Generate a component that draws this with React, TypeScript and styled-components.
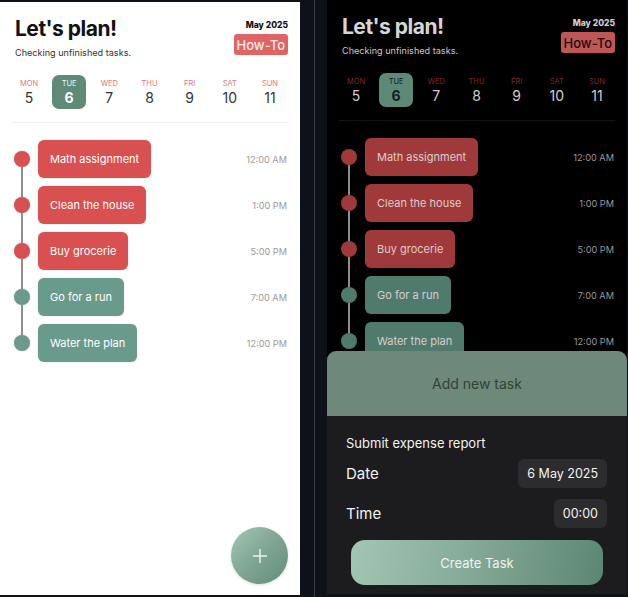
import React from "react";
import styled, { createGlobalStyle, css } from "styled-components";

const Global = createGlobalStyle`
  html, body { margin: 0; padding: 0; background: #0e1118; }
  body { font-family: "Inter", "Liberation Sans", sans-serif; -webkit-font-smoothing: antialiased; }
  * { box-sizing: border-box; }
`;

type Dark = { $dark?: boolean };

const Page = styled.div`
  width: 628px;
  height: 597px;
  display: flex;
  align-items: flex-start;
  padding-top: 2px;
  background: #0e1118;
  overflow: hidden;
`;

const Panel = styled.div<Dark>`
  position: relative;
  width: 300px;
  height: 593px;
  flex-shrink: 0;
  overflow: hidden;
  background: ${(p) => (p.$dark ? "#000" : "#fff")};
  display: flex;
  flex-direction: column;
  ${(p) =>
    p.$dark &&
    css`
      margin-top: -2px;
      height: 594px;
    `}
`;

const Gutter = styled.div`
  width: 27px;
  height: 597px;
  flex-shrink: 0;
  display: flex;
  justify-content: center;
  margin-top: -2px;
`;

const GutterLine = styled.div`
  width: 1px;
  margin-left: 1px;
  height: 100%;
  background: #3a3e47;
`;

const Header = styled.div`
  display: flex;
  justify-content: space-between;
  padding: 14px 12px 0 15px;
`;

const TitleBlock = styled.div`
  display: flex;
  flex-direction: column;
`;

const Title = styled.h1<Dark>`
  margin: 0;
  font-size: 21px;
  line-height: 26px;
  font-weight: 700;
  letter-spacing: -0.5px;
  color: ${(p) => (p.$dark ? "#d6d6d6" : "#111")};
`;

const Subtitle = styled.p<Dark>`
  margin: 5px 0 0;
  font-size: 9.1px;
  line-height: 12px;
  color: ${(p) => (p.$dark ? "#c8c8c8" : "#333")};
`;

const MetaBlock = styled.div`
  display: flex;
  flex-direction: column;
  align-items: flex-end;
  padding-top: 4px;
`;

const Month = styled.span<Dark>`
  font-size: 8.5px;
  line-height: 11px;
  font-weight: 800;
  color: ${(p) => (p.$dark ? "#d0d0d0" : "#111")};
`;

const HowTo = styled.span<Dark>`
  margin-top: 3px;
  height: 21px;
  padding: 0 3px;
  display: flex;
  align-items: center;
  border-radius: 3px;
  font-size: 13px;
  font-weight: 500;
  background: ${(p) => (p.$dark ? "#c05656" : "#e06464")};
  color: ${(p) => (p.$dark ? "#1a0c0c" : "#fbeaea")};
`;

const DayStrip = styled.div`
  display: grid;
  grid-template-columns: repeat(7, 34px);
  justify-content: space-between;
  padding: 16px 13px 0 12px;
`;

const Day = styled.div<Dark & { $active?: boolean }>`
  height: 34px;
  border-radius: 7px;
  display: flex;
  flex-direction: column;
  align-items: center;
  justify-content: center;
  background: ${(p) => (p.$active ? (p.$dark ? "#5d8a77" : "#5e8a77") : "transparent")};
`;

const DayName = styled.span<Dark & { $active?: boolean }>`
  font-size: 7.5px;
  line-height: 10px;
  text-transform: uppercase;
  color: ${(p) =>
    p.$active ? (p.$dark ? "#14201b" : "#f1f6f3") : p.$dark ? "#7d2a2a" : "#e07878"};
`;

const DayNum = styled.span<Dark & { $active?: boolean }>`
  font-size: 14px;
  line-height: 17px;
  font-weight: ${(p) => (p.$active ? 700 : 400)};
  color: ${(p) =>
    p.$active ? (p.$dark ? "#14201b" : "#fff") : p.$dark ? "#cfcfcf" : "#333"};
`;

const Divider = styled.div<Dark>`
  height: 1px;
  margin: 13px 12px 0;
  background: ${(p) => (p.$dark ? "#141414" : "#efefef")};
`;

const Timeline = styled.div`
  display: flex;
  flex-direction: column;
  padding: 13px 13px 0 14px;
`;

const Row = styled.div`
  display: grid;
  grid-template-columns: 24px auto 1fr auto;
  align-items: stretch;
`;

const Rail = styled.div`
  display: flex;
  flex-direction: column;
  align-items: center;
  padding-right: 8px;
  width: 24px;
`;

const Segment = styled.div<{ $hidden?: boolean }>`
  flex: 1;
  width: 2px;
  background: ${(p) => (p.$hidden ? "transparent" : "#8e8e8e")};
`;

const Dot = styled.div<{ $color: string; $dark?: boolean }>`
  width: 16px;
  height: 16px;
  border-radius: 50%;
  background: ${(p) => p.$color};
  box-shadow: ${(p) => (p.$dark ? "none" : "0 0 1.5px rgba(0,0,0,0.25)")};
  flex-shrink: 0;
`;

const PillCell = styled.div`
  padding: 4px 0;
`;

const Pill = styled.div<{ $color: string; $dark?: boolean }>`
  height: 38px;
  padding: 0 12px;
  display: flex;
  align-items: center;
  border-radius: 6px;
  font-size: 11px;
  background: ${(p) => p.$color};
  color: ${(p) => (p.$dark ? "#dccccc" : "#fff")};
  box-shadow: ${(p) => (p.$dark ? "none" : "0 0 1.5px rgba(0,0,0,0.2)")};
  white-space: nowrap;
`;

const Time = styled.span<Dark>`
  grid-column: 4;
  align-self: center;
  font-size: 9.2px;
  color: #9a9a9a;
`;

const Fab = styled.button`
  position: absolute;
  left: 231px;
  top: 525px;
  width: 57px;
  height: 57px;
  border-radius: 50%;
  border: none;
  padding: 0;
  display: flex;
  align-items: center;
  justify-content: center;
  background: linear-gradient(135deg, #a4c6b4 0%, #7fa692 50%, #628c79 100%);
  box-shadow: 0 1px 3px rgba(0,0,0,0.15);
`;

const Sheet = styled.div`
  position: absolute;
  left: 0;
  right: 0;
  bottom: 0;
  height: 243px;
  border-radius: 9px 9px 0 0;
  overflow: hidden;
  display: flex;
  flex-direction: column;
  background: #1c1c1e;
`;

const SheetHeader = styled.div`
  height: 65px;
  display: flex;
  align-items: center;
  justify-content: center;
  background: #6e8979;
  color: #334238;
  font-size: 14px;
`;

const SheetBody = styled.div`
  flex: 1;
  display: flex;
  flex-direction: column;
  padding: 19px 20px 0 19px;
  color: #f2f2f2;
`;

const TaskName = styled.div`
  font-size: 13px;
  line-height: 16px;
`;

const Fields = styled.div`
  display: flex;
  flex-direction: column;
  gap: 11px;
  margin-top: 8px;
`;

const FieldRow = styled.div`
  display: flex;
  align-items: center;
  justify-content: space-between;
`;

const FieldLabel = styled.span`
  font-size: 15px;
`;

const FieldValue = styled.span`
  height: 29px;
  padding: 0 9px;
  border-radius: 6px;
  display: flex;
  align-items: center;
  background: #2c2c2f;
  font-size: 12.5px;
  color: #f2f2f2;
`;

const CreateButton = styled.button`
  margin: 12px 4px 0 5px;
  height: 45px;
  border: none;
  border-radius: 14px;
  background: linear-gradient(100deg, #a3c6b3 0%, #86ab98 45%, #5c8674 100%);
  color: #eef3f0;
  font-family: inherit;
  font-size: 13px;
`;

type Task = { title: string; time: string; done: boolean };

const tasks: Task[] = [
  { title: "Math assignment", time: "12:00 AM", done: false },
  { title: "Clean the house", time: "1:00 PM", done: false },
  { title: "Buy grocerie", time: "5:00 PM", done: false },
  { title: "Go for a run", time: "7:00 AM", done: true },
  { title: "Water the plan", time: "12:00 PM", done: true },
];

const days = [
  ["Mon", 5],
  ["Tue", 6],
  ["Wed", 7],
  ["Thu", 8],
  ["Fri", 9],
  ["Sat", 10],
  ["Sun", 11],
] as const;

const palette = {
  light: { red: "#d95050", green: "#6a9a8b" },
  dark: { red: "#a03a3a", green: "#4f7a6c" },
};

function Planner({ dark }: { dark?: boolean }) {
  const c = dark ? palette.dark : palette.light;
  return (
    <>
      <Header>
        <TitleBlock>
          <Title $dark={dark}>Let's plan!</Title>
          <Subtitle $dark={dark}>Checking unfinished tasks.</Subtitle>
        </TitleBlock>
        <MetaBlock>
          <Month $dark={dark}>May 2025</Month>
          <HowTo $dark={dark}>How-To</HowTo>
        </MetaBlock>
      </Header>
      <DayStrip>
        {days.map(([name, num]) => (
          <Day key={name} $dark={dark} $active={num === 6}>
            <DayName $dark={dark} $active={num === 6}>{name}</DayName>
            <DayNum $dark={dark} $active={num === 6}>{num}</DayNum>
          </Day>
        ))}
      </DayStrip>
      <Divider $dark={dark} />
      <Timeline>
        {tasks.map((t, i) => {
          const color = t.done ? c.green : c.red;
          return (
            <Row key={t.title}>
              <Rail>
                <Segment $hidden={i === 0} />
                <Dot $color={color} $dark={dark} />
                <Segment $hidden={i === tasks.length - 1} />
              </Rail>
              <PillCell>
                <Pill $color={color} $dark={dark}>{t.title}</Pill>
              </PillCell>
              <Time $dark={dark}>{t.time}</Time>
            </Row>
          );
        })}
      </Timeline>
    </>
  );
}

export default function App() {
  return (
    <>
      <Global />
      <Page>
        <Panel>
          <Planner />
          <Fab aria-label="Add task">
            <svg width="16" height="16" viewBox="0 0 16 16">
              <path d="M8 1v14M1 8h14" stroke="#eef4f0" strokeWidth="1.4" />
            </svg>
          </Fab>
        </Panel>
        <Gutter>
          <GutterLine />
        </Gutter>
        <Panel $dark>
          <Planner dark />
          <Sheet>
            <SheetHeader>Add new task</SheetHeader>
            <SheetBody>
              <TaskName>Submit expense report</TaskName>
              <Fields>
                <FieldRow>
                  <FieldLabel>Date</FieldLabel>
                  <FieldValue>6 May 2025</FieldValue>
                </FieldRow>
                <FieldRow>
                  <FieldLabel>Time</FieldLabel>
                  <FieldValue>00:00</FieldValue>
                </FieldRow>
              </Fields>
              <CreateButton>Create Task</CreateButton>
            </SheetBody>
          </Sheet>
        </Panel>
      </Page>
    </>
  );
}
